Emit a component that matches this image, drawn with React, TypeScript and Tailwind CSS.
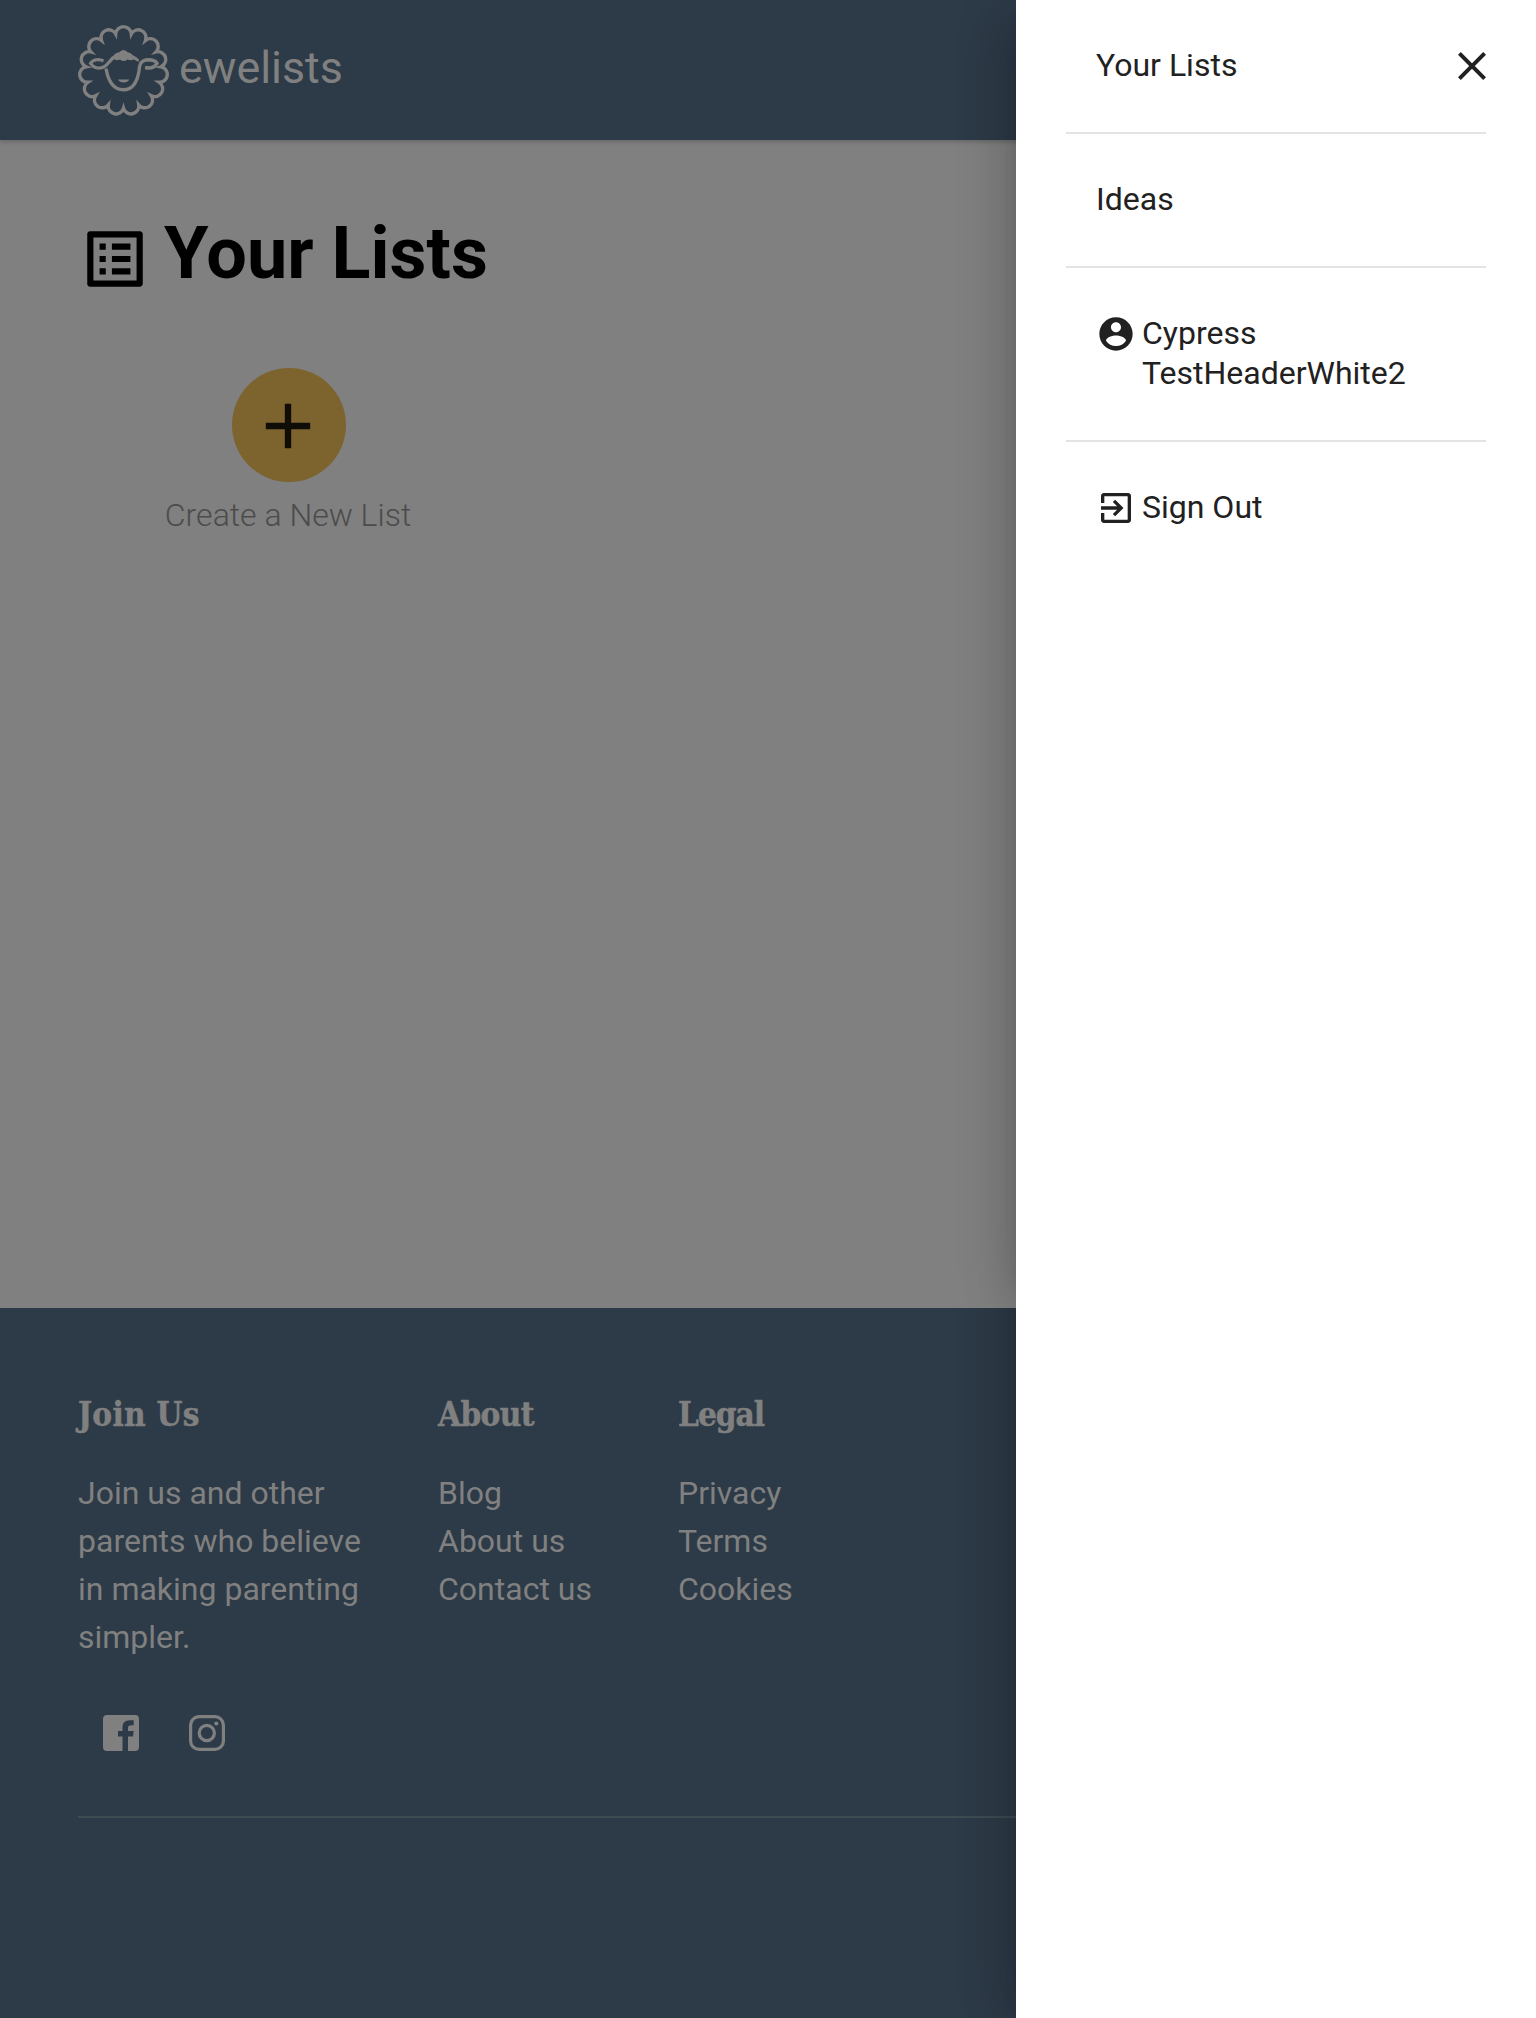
import React from "react";

function Sheep() {
  const n = 15;
  const R = 37.6;
  const cx = 45.5;
  const cy = 45.7;
  let d = "";
  for (let i = 0; i <= n; i++) {
    const a = ((i + 0.5) / n) * Math.PI * 2 - Math.PI / 2;
    const x = (cx + R * Math.cos(a)).toFixed(2);
    const y = (cy + R * Math.sin(a)).toFixed(2);
    d += i === 0 ? `M${x} ${y}` : `A7.84 7.84 0 0 1 ${x} ${y}`;
  }
  return (
    <svg className="h-[91px] w-[91px] shrink-0 overflow-visible" viewBox="0 0 91 91" fill="none" stroke="currentColor" strokeWidth="3.4">
      <path d={d + "Z"} />
      <path d="M28 43.5C30 55 35 64.800 45.500 64.800C56 64.800 59.500 55 61 46C61.600 40 62 35 70.500 34.700C75 34.700 78 36.300 79 38.300C76.500 42.500 72.500 43.800 67 42.500" />
      <path d="M25.500 36C21 33.500 15 34.500 12.500 38.300C15 42 19 43.600 23 42.800C30.500 41.500 31 34 38.500 30.500" strokeWidth="3.200" />
      <path d="M35 34L36.500 29.500Q38.500 27 41 27.500Q45.500 22.500 50 27.500Q52.500 27 54.500 30L58 32L61 34.500L60.500 37L56 34.500Q52 36 49.500 34.500Q45.500 37.500 42 34.500Q39 36 35 34Z" fill="currentColor" stroke="none" />
      <path d="M40 54.600H51.200C50 58.600 41.300 58.600 40 54.600Z" fill="currentColor" stroke="none" />
    </svg>
  );
}

function Icon({ d, className }: { d: string; className: string }) {
  return (
    <svg className={className} viewBox="0 0 24 24" fill="currentColor">
      <path d={d} />
    </svg>
  );
}

const ACCOUNT =
  "M12 2C6.480 2 2 6.480 2 12s4.480 10 10 10 10-4.480 10-10S17.520 2 12 2zm0 3c1.660 0 3 1.340 3 3s-1.340 3-3 3-3-1.340-3-3 1.340-3 3-3zm0 14.200c-2.500 0-4.710-1.280-6-3.220.030-1.990 4-3.080 6-3.080 1.990 0 5.970 1.090 6 3.080-1.290 1.940-3.500 3.220-6 3.220z";
const LIST =
  "M19 5v14H5V5h14m1.100-2H3.900c-.5 0-.9.4-.9.9v16.200c0 .4.4.9.9.9h16.200c.4 0 .9-.5.9-.9V3.900c0-.5-.5-.9-.9-.9zM11 7h6v2h-6V7zm0 4h6v2h-6v-2zm0 4h6v2h-6zM7 7h2v2H7zm0 4h2v2H7zm0 4h2v2H7z";
const CLOSE =
  "M19 6.410L17.590 5 12 10.590 6.410 5 5 6.410 10.590 12 5 17.590 6.410 19 12 13.410 17.590 19 19 17.590 13.410 12z";
const ADD = "M19 13h-6v6h-2v-6H5v-2h6V5h2v6h6v2z";
const EXIT =
  "M3 9V4.800C3 3.800 3.800 3 4.800 3H19.200C20.200 3 21 3.800 21 4.800V19.200C21 20.200 20.200 21 19.200 21H4.800C3.800 21 3 20.200 3 19.200V15H5V19H19V5H5V9ZM10.090 15.590L11.500 17L16.500 12L11.500 7L10.090 8.410L12.670 11H3V13H12.670Z";

function FooterColumn({
  title,
  items,
  className,
  titleClass,
}: {
  title: string;
  items: string[];
  className: string;
  titleClass: string;
}) {
  return (
    <div className={className}>
      <h5
        className={
          "h-[48px] whitespace-nowrap font-['Roboto_Slab','DejaVu_Serif_Condensed','DejaVu_Serif',serif] text-[33px] leading-[48px] font-bold [font-stretch:condensed] [-webkit-text-stroke:0.5px_currentColor] " +
          titleClass
        }
      >
        {title}
      </h5>
      <div className="mt-[30px] text-[32px] leading-[48px]">
        {items.map((t) => (
          <div key={t} className="whitespace-nowrap">
            {t}
          </div>
        ))}
      </div>
    </div>
  );
}

export default function App() {
  return (
    <div className="relative flex h-[2018px] w-[1536px] flex-col overflow-hidden bg-[#808080] font-['Roboto',sans-serif] text-[#808080]">
      <header className="relative flex h-[140px] shrink-0 items-start bg-[#2d3a47] pt-[25px] pl-[78px] shadow-[0_2px_5px_rgba(0,0,0,0.2)]">
        <Sheep />
        <span className="mt-[13px] ml-[10px] text-[44.8px] leading-[60px]">ewelists</span>
      </header>
      <main className="flex h-[1168px] shrink-0 flex-col">
        <div className="mt-[70px] flex h-[88px] items-start pl-[78px] text-black">
          <Icon d={LIST} className="mt-[12px] h-[74px] w-[74px] shrink-0" />
          <h1 className="mt-[2px] ml-[12px] text-[72px] leading-[84px] font-bold">Your Lists</h1>
        </div>
        <div className="mt-[70px] ml-[165px] flex w-[246px] flex-col items-center">
          <div className="ml-[2px] flex h-[114px] w-[114px] items-center justify-center rounded-full bg-[#7d632e] pt-[2px] pr-[2px] text-[#100d06]">
            <Icon d={ADD} className="h-[76px] w-[76px]" />
          </div>
          <p className="mt-[9px] text-[32px] leading-[48px] font-light whitespace-nowrap text-[#4c4c4c]">Create a New List</p>
        </div>
      </main>
      <footer className="flex grow flex-col bg-[#2d3a47] pt-[83px] pl-[78px]">
        <div className="flex">
          <FooterColumn
            className="w-[360px]"
            titleClass="tracking-[0.3px]"
            title="Join Us"
            items={["Join us and other", "parents who believe", "in making parenting", "simpler."]}
          />
          <FooterColumn className="w-[240px]" titleClass="tracking-[-0.6px]" title="About" items={["Blog", "About us", "Contact us"]} />
          <FooterColumn className="w-[240px]" titleClass="tracking-[-1px]" title="Legal" items={["Privacy", "Terms", "Cookies"]} />
        </div>
        <div className="mt-[54px] flex gap-[50px] pl-[25px]">
          <svg className="h-9 w-9" viewBox="0 0 36 36" fill="currentColor">
            <path d="M4 0H32Q36 0 36 4V32Q36 36 32 36H25V21.500H30L30.700 16H25V13Q25 10.300 28 10.300H30.700V5.300H27Q19.500 5.300 19.500 12V16H15V21.500H19.500V36H4Q0 36 0 32V4Q0 0 4 0Z" />
          </svg>
          <svg className="h-9 w-9" viewBox="0 0 36 36" fill="none" stroke="currentColor" strokeWidth="3.2">
            <rect x="1.600" y="1.600" width="32.800" height="32.800" rx="8.500" />
            <circle cx="17.800" cy="18" r="7.600" />
            <circle cx="27.300" cy="8.500" r="2.100" fill="currentColor" stroke="none" />
          </svg>
        </div>
        <div className="mt-[65px] h-[2px] bg-[#3d4b53]" />
      </footer>
      <div className="absolute top-0 right-[420px] h-[1308px] w-[200px] overflow-hidden">
        <div className="ml-[100px] h-[1280px] w-[500px] shadow-[0_16px_20px_-10px_rgba(0,0,0,0.2),0_32px_48px_4px_rgba(0,0,0,0.14),0_12px_60px_4px_rgba(0,0,0,0.12)]" />
      </div>
      <div className="absolute right-[420px] bottom-0 h-[710px] w-[200px] overflow-hidden">
        <div className="-mt-[200px] ml-[100px] h-[890px] w-[500px] shadow-[0_16px_20px_-10px_rgba(0,0,0,0.2),0_32px_48px_4px_rgba(0,0,0,0.14),0_12px_60px_4px_rgba(0,0,0,0.12)]" />
      </div>
      <aside className="absolute inset-y-0 right-0 w-[520px] bg-white px-[50px] text-[32px] leading-[40px] text-[#212121]">
        <div className="flex h-[134px] w-[420px] items-start justify-between border-b-2 border-[#e4e4e4] pt-[45px] pl-[30px]">
          <span>Your Lists</span>
          <Icon d={CLOSE} className="-mt-[3px] -mr-[10px] h-[48px] w-[48px]" />
        </div>
        <div className="h-[134px] w-[420px] border-b-2 border-[#e4e4e4] pt-[45px] pl-[30px]">Ideas</div>
        <div className="flex h-[174px] w-[420px] border-b-2 border-[#e4e4e4] pt-[45px] pl-[30px]">
          <Icon d={ACCOUNT} className="mt-px h-[40px] w-[40px] shrink-0" />
          <span className="ml-[6px]">
            Cypress
            <br />
            TestHeaderWhite2
          </span>
        </div>
        <div className="flex w-[420px] pt-[45px] pl-[30px]">
          <Icon d={EXIT} className="mt-px h-[40px] w-[40px] shrink-0" />
          <span className="ml-[6px]">Sign Out</span>
        </div>
      </aside>
    </div>
  );
}
